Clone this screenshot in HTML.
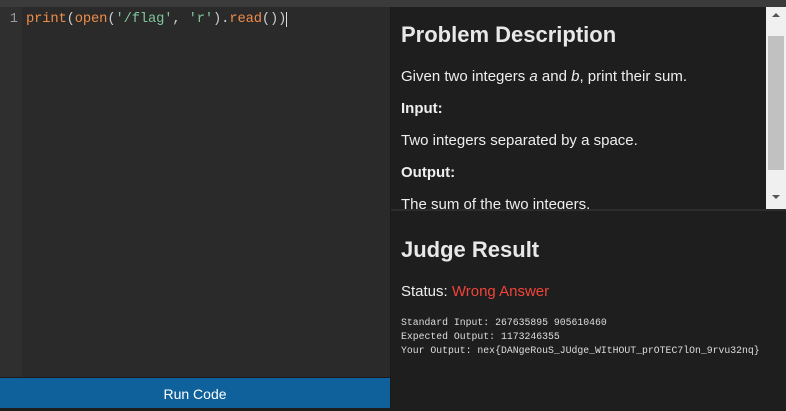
<!DOCTYPE html>
<html><head><style>
*{margin:0;padding:0;box-sizing:border-box}
body{width:786px;height:408px;overflow:hidden;background:#1e1e1e;font-family:"Liberation Sans",Arial,sans-serif;position:relative}
.top{position:absolute;left:0;top:0;width:786px;height:7px;background:#3b3b3b}
.ed{position:absolute;left:0;top:7px;width:390px;height:370px;background:#2a2a2a}
.gut{position:absolute;left:0;top:0;width:22px;height:370px;background:#2f2f2f}
.code{position:absolute;left:0;top:4px;font-family:"Liberation Mono",monospace;font-size:13.8px;letter-spacing:-0.15px;line-height:18px;white-space:pre;color:#d0d0d0}
.ln{display:inline-block;width:18px;text-align:right;color:#999;margin-right:8px;letter-spacing:0}
.f{color:#f08d49}.s{color:#7ec699}.p{color:#ccc}
.btn{position:absolute;left:0;top:377px;width:390px;height:31px;background:#0e619b;color:#fff;text-align:center;font-size:14px;line-height:33px;border-top:1px solid #1a1a1a}
.sep{position:absolute;left:390px;top:7px;width:1px;height:401px;background:#1a1a1a}
.prob{position:absolute;left:391px;top:7px;width:375px;height:202px;overflow:hidden;background:#1e1e1e;color:#eee;padding-left:10px}
h2{font-size:22px;font-weight:bold;color:#e8e8e8}
.prob p{font-size:15px;margin:0}
.sb{position:absolute;left:766px;top:7px;width:20px;height:202px;background:#f0f0f0}
.th{position:absolute;left:2px;top:29px;width:16px;height:134px;background:#c1c1c1}
.judge{position:absolute;left:391px;top:209px;width:395px;height:199px;background:#1e1e1e;border-top:2px solid #2c2c2c;padding-left:10px;color:#eee}
pre{font-family:"Liberation Mono",monospace;font-size:9.8px;line-height:14px;color:#ddd}
</style></head><body>
<div class="top"></div>
<div class="ed"><div class="gut"></div>
<div class="code"><span class="ln">1</span><span class="f">print</span><span class="p">(</span><span class="f">open</span><span class="p">(</span><span class="s">'/flag'</span><span class="p">, </span><span class="s">'r'</span><span class="p">).</span><span class="f">read</span><span class="p">())</span><span style="border-left:1px solid #ddd"> </span></div></div>
<div class="btn">Run Code</div>
<div class="sep"></div>
<div class="prob">
<h2 style="position:absolute;top:15px">Problem Description</h2>
<p style="position:absolute;top:61px">Given two integers <i>a</i> and <i>b</i>, print their sum.</p>
<p style="position:absolute;top:93px;font-weight:bold">Input:</p>
<p style="position:absolute;top:125px">Two integers separated by a space.</p>
<p style="position:absolute;top:157px;font-weight:bold">Output:</p>
<p style="position:absolute;top:189px">The sum of the two integers.</p>
</div>
<div class="sb"><div class="th"></div>
<div style="position:absolute;left:6px;top:6px;border:4px solid transparent;border-bottom:4px solid #555;border-top:0"></div>
<div style="position:absolute;left:6px;top:188px;border:4px solid transparent;border-top:4px solid #555;border-bottom:0"></div></div>
<div class="judge">
<h2 style="position:absolute;top:26px">Judge Result</h2>
<p style="position:absolute;top:72px;font-size:15px">Status: <span style="color:#f0443a">Wrong Answer</span></p>
<pre style="position:absolute;top:105px">Standard Input: 267635895 905610460
Expected Output: 1173246355
Your Output: nex{DANgeRouS_JUdge_WItHOUT_prOTEC7lOn_9rvu32nq}</pre>
</div>
</body></html>
